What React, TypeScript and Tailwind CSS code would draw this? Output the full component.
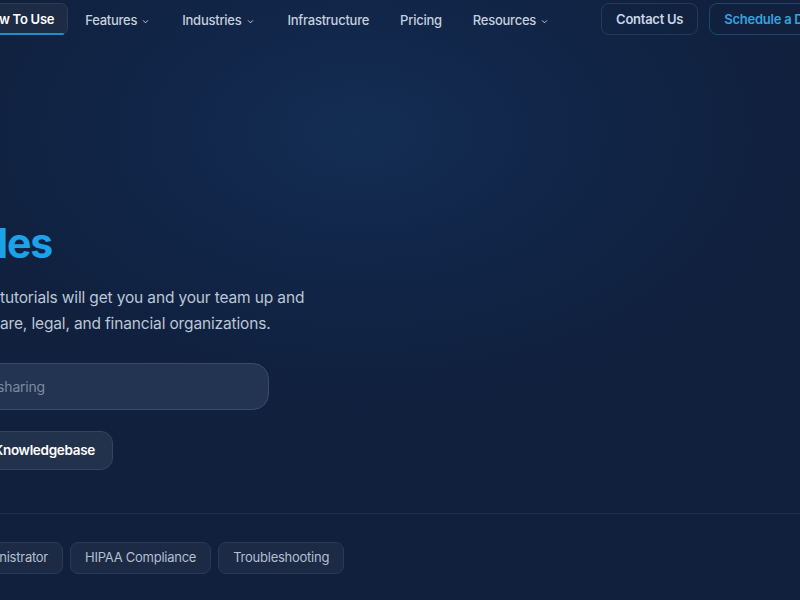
import React from "react";

function Chevron() {
  return (
    <svg width="7" height="7" viewBox="0 0 8 8" className="ml-[5px] mt-[1px]" fill="none">
      <path d="M1.5 3l2.5 2.5L6.5 3" stroke="currentColor" strokeWidth="1.1" strokeLinecap="round" strokeLinejoin="round" />
    </svg>
  );
}

function Chip({ label }: { label: string }) {
  return (
    <div className="h-[32px] flex items-center px-[14px] rounded-[8px] bg-[#1c2a45] border border-[#2a3955] text-[13px] tracking-[-0.25px] text-[#b4bfd0] whitespace-nowrap">
      {label}
    </div>
  );
}

export default function App() {
  const font = { fontFamily: "Inter, 'Open Sans', sans-serif" };
  return (
    <div
      className="relative w-[800px] h-[600px] overflow-hidden bg-[#10203d] bg-[radial-gradient(ellipse_55%_45%_at_45%_22%,#142d53_0%,#112649_45%,transparent_100%)]"
      style={font}
    >
      {/* NAV */}
      <nav className="flex items-center h-[38px] -ml-[33px] w-[1000px] whitespace-nowrap">
        <div className="flex items-center">
          <div className="relative h-[32px] flex items-center pt-[2px] pl-[14px] pr-[13px] rounded-[7px] bg-[#1d2b45] border border-[#2c3b56] text-white text-[13px] font-semibold tracking-[-0.25px]">
            How To Use
            <span className="absolute left-[4px] right-[3px] -bottom-[1px] h-[2px] rounded-full bg-[#1b8fcf]" />
          </div>
          <div className="flex items-center pt-[3px] text-[13px] font-medium text-[#c6cfdd] tracking-[-0.25px]">
            <span className="flex items-center pl-[17px] pr-[16px]">Features<Chevron /></span>
            <span className="flex items-center px-[17px]">Industries<Chevron /></span>
            <span className="flex items-center pl-[17px] pr-[16px]">Infrastructure</span>
            <span className="flex items-center px-[15px]">Pricing</span>
            <span className="flex items-center pl-[16px] pr-[17px]">Resources<Chevron /></span>
          </div>
        </div>
        <div className="flex items-center gap-[11px] ml-[36px]">
          <div className="h-[32px] flex items-center pt-[2px] px-[14px] rounded-[8px] border border-[#2a3852] text-[13px] font-semibold text-[#cbd4e2] tracking-[-0.25px]">
            Contact Us
          </div>
          <div className="h-[32px] flex items-center pt-[2px] px-[14px] rounded-[8px] border border-[#1d4670] text-[13px] font-semibold text-[#36a2de] tracking-[-0.25px]">
            Schedule a Demo
          </div>
        </div>
      </nav>

      {/* HERO */}
      <section className="pt-[180px]">
        <div className="-ml-[400px] w-[452px] flex justify-end">
          <h1 className="text-[41px] leading-[50px] font-bold tracking-[-1.2px] text-[#1ba2ea] whitespace-nowrap">
            <span className="text-white">How-To </span>Articles
          </h1>
        </div>
        <p className="mt-[17px] -ml-[300px] text-[15.5px] leading-[26px] text-[#bcc6d6] tracking-[-0.15px] whitespace-nowrap">
          <span className="inline-block w-[300px] text-right">Our step-by-step guides and video&nbsp;</span>tutorials will get you and your team up and
          <br />
          <span className="inline-block w-[300px] text-right">running quickly in healthc</span>are, legal, and financial organizations.
        </p>
        <div className="mt-[26px] -ml-[400px] w-[669px] flex justify-end">
          <div className="w-[500px] h-[47px] flex items-center pl-[29px] rounded-[16px] bg-[#273956]/80 border border-[#3a4b67] text-[14px] tracking-[-0.2px] text-[#7c8aa3] whitespace-nowrap">
            Search guides, e.g. secure file sharing
          </div>
        </div>
        <div className="mt-[21px] -ml-[300px] w-[413px] flex justify-end">
          <div className="h-[39px] flex items-center pl-[18px] pr-[17px] rounded-[12px] bg-[#22324d] border border-[#34445f] text-[13.5px] font-semibold text-white tracking-[-0.3px] whitespace-nowrap">
            Browse Knowledgebase
          </div>
        </div>
      </section>

      <div className="mt-[43px] h-px w-full bg-[#1f2f4c]" />

      <div className="mt-[28px] flex gap-[7px] -ml-[293px]">
        <div className="w-[356px] flex justify-end gap-[7px]">
          <Chip label="Getting Started" />
          <Chip label="Administrator" />
        </div>
        <Chip label="HIPAA Compliance" />
        <Chip label="Troubleshooting" />
      </div>
    </div>
  );
}
